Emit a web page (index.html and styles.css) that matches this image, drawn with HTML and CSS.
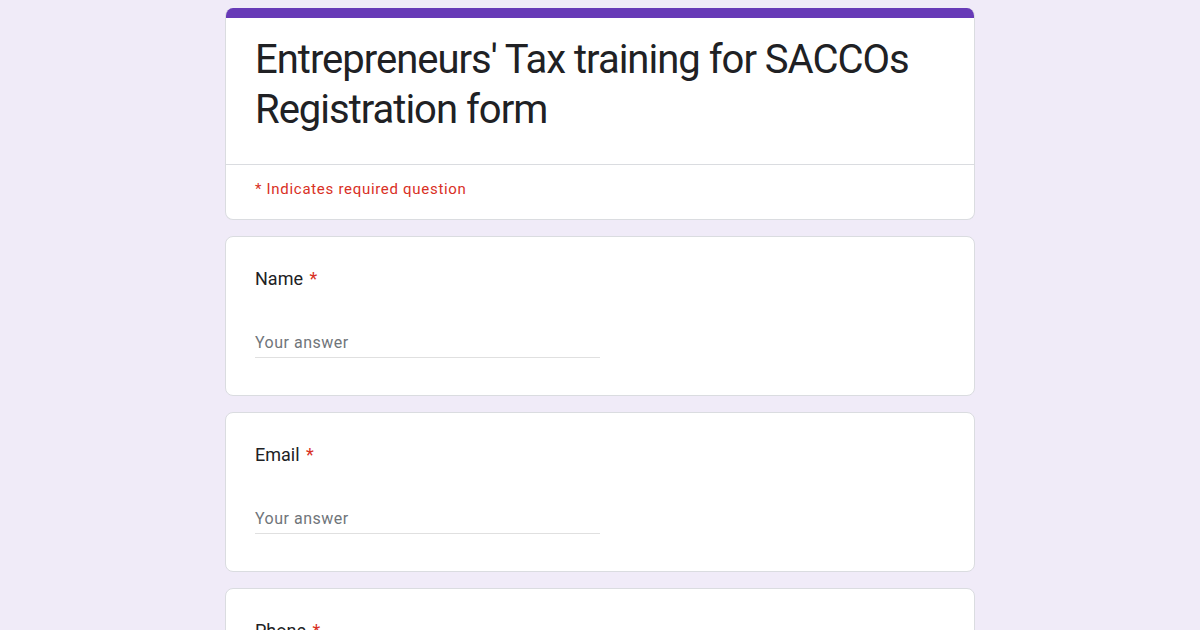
FILE: index.html
```html
<!DOCTYPE html>
<html lang="en">
<head>
<meta charset="utf-8">
<title>Entrepreneurs' Tax training for SACCOs Registration form</title>
<link rel="stylesheet" href="styles.css">
</head>
<body>
<main class="form">
  <section class="card header-card">
    <div class="accent"></div>
    <div class="title-block">
      <h1 class="title">Entrepreneurs' Tax training for SACCOs Registration form</h1>
    </div>
    <div class="required-note">* Indicates required question</div>
  </section>

  <section class="card question">
    <div class="label">Name <span class="star">*</span></div>
    <div class="answer"><span class="placeholder">Your answer</span></div>
  </section>

  <section class="card question">
    <div class="label">Email <span class="star">*</span></div>
    <div class="answer"><span class="placeholder">Your answer</span></div>
  </section>

  <section class="card question">
    <div class="label">Phone <span class="star">*</span></div>
    <div class="answer"><span class="placeholder">Your answer</span></div>
  </section>
</main>
</body>
</html>
```

FILE: styles.css
```css
html, body {
  margin: 0;
  padding: 0;
}
body {
  background: #f0ebf8;
  font-family: Roboto, "Liberation Sans", Arial, sans-serif;
  color: #202124;
}
.form {
  width: 750px;
  margin: 8px auto 0;
  display: flex;
  flex-direction: column;
  gap: 16px;
  padding-bottom: 16px;
}
.card {
  background: #fff;
  border: 1px solid #dadce0;
  border-radius: 8px;
  box-sizing: border-box;
}
.header-card {
  border-top: none;
  overflow: hidden;
}
.accent {
  height: 10px;
  background: #673ab7;
}
.title-block {
  padding: 17px 30px 29px 29px;
  border-bottom: 1px solid #dadce0;
}
.title {
  margin: 0;
  font-size: 40px;
  line-height: 50px;
  font-weight: 400;
  letter-spacing: -1px;
  color: #202124;
}
.required-note {
  padding: 14px 30px 19px 29px;
  font-size: 15px;
  line-height: 21px;
  letter-spacing: 0.7px;
  color: #d93025;
}
.question {
  padding: 30px 30px 37px 29px;
}
.label {
  font-size: 18px;
  line-height: 24px;
  color: #202124;
}
.star {
  color: #d93025;
  margin-left: 2px;
}
.answer {
  margin-top: 40px;
  width: 50%;
  padding-bottom: 2px;
  border-bottom: 1px solid #e0e0e0;
  line-height: 24px;
}
.placeholder {
  font-size: 16px;
  letter-spacing: 0.5px;
  color: #70757a;
}
```
